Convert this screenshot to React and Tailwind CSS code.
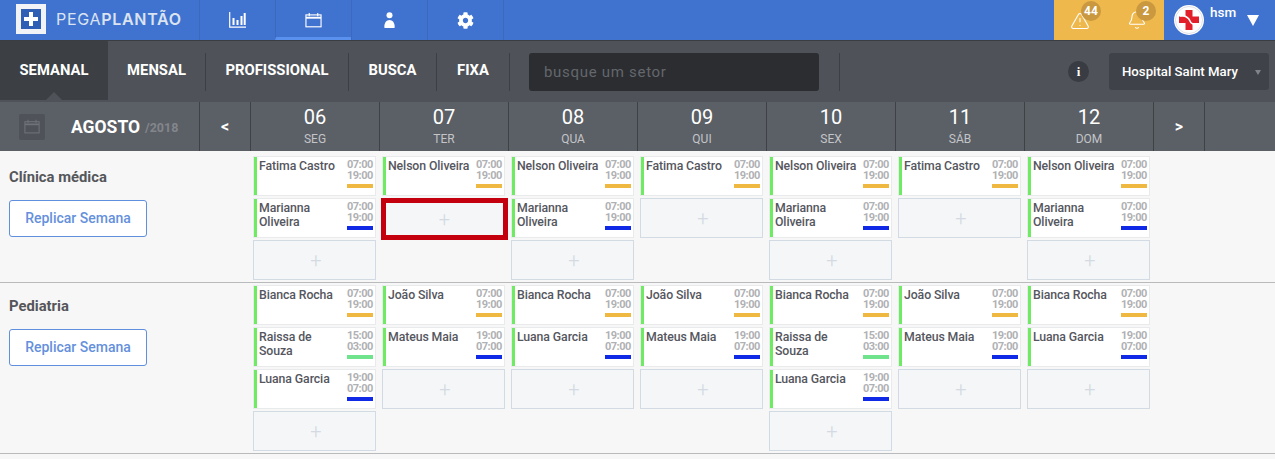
import { FaCog } from "react-icons/fa";
import { TriangleAlert, Bell } from "lucide-react";

const CalendarIcon = ({ className }) => (
  <svg viewBox="0 0 18 16" className={className} fill="none" stroke="currentColor" strokeWidth="1.2">
    <rect x="1" y="2.6" width="16" height="12.6" />
    <path d="M1 5.6h16" strokeWidth="2" />
    <path d="M4.5 0.5v3.5M13.5 0.5v3.5" />
  </svg>
);

const ChartIcon = () => (
  <svg viewBox="0 0 17 16" className="w-[17px] h-[16px] text-white" fill="none" stroke="currentColor">
    <path d="M0.7 0v15.2h16.3" strokeWidth="1.2" />
    <path d="M4.5 6v7M8.5 8v5M12.5 4v9M15.7 1v12" strokeWidth="2" />
  </svg>
);

const PersonIcon = () => (
  <svg viewBox="0 0 11 16" className="w-[11px] h-[16px] text-white" fill="currentColor">
    <circle cx="5.5" cy="3.2" r="3" />
    <path d="M0.5 16c-0.8-4.2 1.6-8 5-8s5.800 3.800 5 8z" />
  </svg>
);

const HospitalLogo = () => (
  <svg viewBox="0 0 30 30" className="w-[30px] h-[30px]">
    <circle cx="15" cy="15" r="15" fill="#fff" />
    <circle cx="15" cy="15" r="13.500" fill="none" stroke="#c9c9d6" strokeWidth="0.600" />
    <path d="M11.500 5h7v6.500H25v6.500h-6.500V25h-7v-7H5v-6.500h6.500z" fill="#e2202c" />
    <path d="M6 11c5-1 9 2 10 5s3 3.500 8 3" fill="none" stroke="#fff" strokeWidth="1.600" />
  </svg>
);

const yellow = "bg-[#efb840]";
const blue = "bg-[#1029e6]";
const green = "bg-[#6fe48c]";

const fatima = { name: "Fatima Castro", start: "07:00", end: "19:00", color: yellow };
const nelson = { name: "Nelson Oliveira", start: "07:00", end: "19:00", color: yellow };
const marianna = { name: "Marianna Oliveira", start: "07:00", end: "19:00", color: blue };
const bianca = { name: "Bianca Rocha", start: "07:00", end: "19:00", color: yellow };
const joao = { name: "João Silva", start: "07:00", end: "19:00", color: yellow };
const raissa = { name: "Raissa de Souza", start: "15:00", end: "03:00", color: green };
const mateus = { name: "Mateus Maia", start: "19:00", end: "07:00", color: blue };
const luana = { name: "Luana Garcia", start: "19:00", end: "07:00", color: blue };

const sectors = [
  {
    name: "Clínica médica",
    height: "h-[132px]",
    labelPad: "pt-[17px]",
    cardPad: "pt-[5px]",
    days: [
      [fatima, marianna, "add"],
      [nelson, "selected"],
      [nelson, marianna, "add"],
      [fatima, "add"],
      [nelson, marianna, "add"],
      [fatima, "add"],
      [nelson, marianna, "add"],
    ],
  },
  {
    name: "Pediatria",
    height: "h-[171px]",
    labelPad: "pt-[14px]",
    cardPad: "pt-[2px]",
    days: [
      [bianca, raissa, luana, "add"],
      [joao, mateus, "add"],
      [bianca, luana, "add"],
      [joao, mateus, "add"],
      [bianca, raissa, luana, "add"],
      [joao, mateus, "add"],
      [bianca, luana, "add"],
    ],
  },
];

const week = [
  ["06", "SEG"],
  ["07", "TER"],
  ["08", "QUA"],
  ["09", "QUI"],
  ["10", "SEX"],
  ["11", "SÁB"],
  ["12", "DOM"],
];

const ShiftCard = ({ shift }) => (
  <div className="w-[123px] h-[40px] flex bg-white border border-[#e9eaeb]">
    <div className="w-[3px] shrink-0 bg-[#6fea63]" />
    <div className="flex-1 pl-[2px] pt-[2px] text-[12.3px] leading-[14px] font-medium text-[#55565e] tracking-[-0.1px]">{shift.name}</div>
    <div className="w-[26px] mr-[2px] shrink-0 flex flex-col pt-[2px] text-[11px] leading-[11px] font-bold tracking-[-0.5px] text-[#b0b1b4]">
      <span>{shift.start}</span>
      <span>{shift.end}</span>
      <div className={`h-[4px] mt-[3px] ${shift.color}`} />
    </div>
  </div>
);

const AddSlot = ({ selected }) =>
  selected ? (
    <div className="w-[127px] -ml-[1px] h-[42px] flex items-center justify-center bg-[#f5f6f7] border-[5px] border-[#c4000f] text-[20px] font-light text-[#d3dae3]">+</div>
  ) : (
    <div className="w-[123px] h-[40px] pl-[3px] flex items-center justify-center bg-[#f5f6f7] border border-[#d2dae4] text-[20px] font-light text-[#d3dae3]">+</div>
  );

const Sector = ({ sector }) => (
  <div className={`flex border-b border-[#b9babb] ${sector.height}`}>
    <div className={`w-[251px] shrink-0 pl-[9px] ${sector.labelPad}`}>
      <div className="text-[14.8px] leading-[18px] font-bold text-[#55565a]">{sector.name}</div>
      <button className="mt-[14px] w-[138px] h-[37px] border border-[#5f8fdd] rounded-[3px] bg-white text-[14px] font-medium text-[#6590dc]">Replicar Semana</button>
    </div>
    {sector.days.map((day, i) => (
      <div key={i} className={`w-[129px] shrink-0 pl-[2px] flex flex-col gap-[2px] ${sector.cardPad}`}>
        {day.map((item, j) =>
          item === "add" ? (
            <AddSlot key={j} />
          ) : item === "selected" ? (
            <AddSlot key={j} selected />
          ) : (
            <ShiftCard key={j} shift={item} />
          )
        )}
      </div>
    ))}
  </div>
);

export default function App() {
  return (
    <div className="w-[1275px] h-[459px] overflow-hidden bg-[#f7f7f8] font-['Roboto',sans-serif]">
      {/* top bar */}
      <div className="h-[41px] flex bg-[#4073cf] border-b border-[#3a3d42]">
        <div className="w-[199px] shrink-0 flex items-center pl-[16px] gap-[10px] pb-[2px]">
          <div className="w-[30px] h-[30px] border-[5px] border-[#f1f3f7] bg-[#2f5fb5] flex items-center justify-center">
            <svg viewBox="0 0 14 14" className="w-[14px] h-[14px]" fill="#fff">
              <path d="M5 0h4v5h5v4H9v5H5V9H0V5h5z" />
            </svg>
          </div>
          <div className="text-[16px] tracking-[0.7px] text-[#dbe3f1] font-['Inter',sans-serif] whitespace-nowrap">
            <span className="font-normal">PEGA</span>
            <span className="font-semibold">PLANTÃO</span>
          </div>
        </div>
        {[<ChartIcon key="c" />, <CalendarIcon key="k" className="w-[17px] h-[16px] text-white" />, <PersonIcon key="p" />, <FaCog key="g" className="text-[17px] text-white" />].map((icon, i) => (
          <div
            key={i}
            className={`w-[76px] h-[40px] shrink-0 flex items-center justify-center border-l border-[#3b6abd] ${i === 1 ? "border-b-[3px] border-b-[#5a90ee] pt-[3px]" : ""}`}
          >
            {icon}
          </div>
        ))}
        <div className="w-[1px] h-[40px] bg-[#3b6abd]" />
        <div className="flex-1" />
        <div className="w-[110px] h-[40px] flex bg-[#efb84d]">
          <div className="w-[52px] relative">
            <TriangleAlert className="absolute left-[16px] top-[11px] text-white" size={20} strokeWidth={1.300} />
            <span className="absolute left-[27px] top-[1px] w-[20px] h-[20px] rounded-full bg-[#c9983f] text-white text-[12px] leading-[20px] font-bold text-center">44</span>
          </div>
          <div className="w-[58px] relative">
            <Bell className="absolute left-[21px] top-[10px] text-white" size={20} strokeWidth={1.300} />
            <span className="absolute left-[30px] top-[1px] w-[20px] h-[20px] rounded-full bg-[#c9983f] text-white text-[12px] leading-[20px] font-bold text-center">2</span>
          </div>
        </div>
        <div className="w-[111px] h-[40px] flex pl-[10px] pt-[5px]">
          <HospitalLogo />
          <span className="ml-[6px] text-[13.500px] leading-[15px] font-medium text-white">hsm</span>
          <span className="ml-[11px] mt-[10px] w-0 h-0 border-l-[6px] border-r-[6px] border-t-[11px] border-l-transparent border-r-transparent border-t-white" />
        </div>
      </div>

      {/* second bar */}
      <div className="h-[61px] flex items-center bg-[#4f5359]">
        <div className="relative w-[108px] h-[61px] flex items-center justify-center">
          <div className="absolute inset-x-0 top-0 h-[59px] bg-[#3c3f44]" />
          <span className="relative text-[14.8px] font-bold text-white pb-[2px]">SEMANAL</span>
          <span className="absolute left-[46px] bottom-[2px] w-0 h-0 border-l-[8px] border-r-[8px] border-b-[8px] border-l-transparent border-r-transparent border-b-[#4f5359]" />
        </div>
        {[
          ["MENSAL", "w-[98px]"],
          ["PROFISSIONAL", "w-[143px]"],
          ["BUSCA", "w-[88px]"],
          ["FIXA", "w-[73px]"],
        ].map(([label, width]) => (
          <div key={label} className={`${width} h-[38px] flex items-center justify-center border-r border-[#3c3f44] text-[14.8px] font-bold text-white pb-[2px]`}>
            {label}
          </div>
        ))}
        <input
          placeholder="busque um setor"
          className="ml-[19px] w-[290px] h-[38px] px-[15px] rounded-[3px] bg-[#2b2d31] text-[15px] tracking-[0.7px] placeholder:text-[#64676c] outline-none"
        />
        <div className="ml-[20px] w-[1px] h-[38px] bg-[#3c3f44]" />
        <div className="ml-[228px] w-[21px] h-[21px] rounded-full bg-[#393c42] flex items-center justify-center text-white text-[13px] font-bold font-['Liberation_Serif',serif]">i</div>
        <div className="ml-[20px] w-[160px] h-[37px] rounded-[3px] bg-[#3f4349] flex items-center justify-between pl-[13px] pr-[8px] text-[13.200px] font-medium text-white">
          <span>Hospital Saint Mary</span>
          <span className="w-0 h-0 mt-[2px] border-l-[3px] border-r-[3px] border-t-[5px] border-l-transparent border-r-transparent border-t-[#80838a]" />
        </div>
      </div>

      {/* week header */}
      <div className="h-[49px] flex bg-[#5b5f66]">
        <div className="w-[200px] shrink-0 border-r border-[#3e4146] flex items-center pl-[19px]">
          <div className="w-[26px] h-[26px] rounded-[2px] bg-[#4f5359] flex items-center justify-center">
            <CalendarIcon className="w-[16px] h-[15px] text-[#6f7278]" />
          </div>
          <span className="ml-[26px] mt-[1px] text-[17.5px] font-bold text-white">AGOSTO</span>
          <span className="ml-[5px] mt-[4px] text-[12.5px] font-bold text-[#83868b]">/2018</span>
        </div>
        <div className="w-[51px] shrink-0 border-r border-[#3e4146] flex items-center justify-center text-[16px] font-bold text-white">&lt;</div>
        {week.map(([num, label]) => (
          <div key={num} className="w-[129px] shrink-0 border-r border-[#3e4146] flex flex-col items-center pt-[3px]">
            <span className="text-[20px] leading-[24px] text-white">{num}</span>
            <span className="mt-[3px] text-[12px] leading-[14px] text-[#c3c5c8]">{label}</span>
          </div>
        ))}
        <div className="w-[51px] shrink-0 border-r border-[#3e4146] flex items-center justify-center text-[16px] font-bold text-white">&gt;</div>
      </div>

      {sectors.map((sector) => (
        <Sector key={sector.name} sector={sector} />
      ))}
    </div>
  );
}
